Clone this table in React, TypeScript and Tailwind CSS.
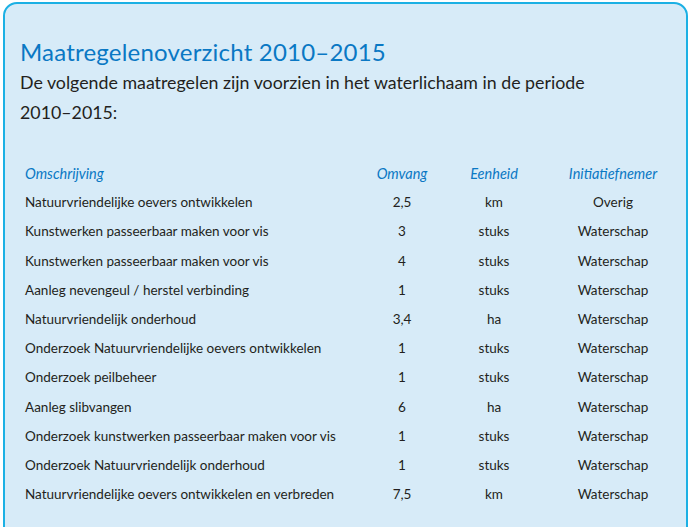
const rows: [string, string, string, string][] = [
  ["Natuurvriendelijke oevers ontwikkelen", "2,5", "km", "Overig"],
  ["Kunstwerken passeerbaar maken voor vis", "3", "stuks", "Waterschap"],
  ["Kunstwerken passeerbaar maken voor vis", "4", "stuks", "Waterschap"],
  ["Aanleg nevengeul / herstel verbinding", "1", "stuks", "Waterschap"],
  ["Natuurvriendelijk onderhoud", "3,4", "ha", "Waterschap"],
  ["Onderzoek Natuurvriendelijke oevers ontwikkelen", "1", "stuks", "Waterschap"],
  ["Onderzoek peilbeheer", "1", "stuks", "Waterschap"],
  ["Aanleg slibvangen", "6", "ha", "Waterschap"],
  ["Onderzoek kunstwerken passeerbaar maken voor vis", "1", "stuks", "Waterschap"],
  ["Onderzoek Natuurvriendelijk onderhoud", "1", "stuks", "Waterschap"],
  ["Natuurvriendelijke oevers ontwikkelen en verbreden", "7,5", "km", "Waterschap"],
];

export default function App() {
  return (
    <div className="w-[688px] h-[527px] overflow-hidden bg-white" style={{ fontFamily: "Lato, 'Noto Sans', sans-serif" }}>
      <div className="ml-[3px] mt-[2px] w-[685px] h-[560px] rounded-t-[14px] border-[2.5px] border-[#1bb0e4] bg-[#d7ebf8] pl-[15px] pt-[33px]">
        <h1 className="text-[24px] leading-[30px] text-[#0a78c4] tracking-[0.2px]">
          Maatregelenoverzicht 2010–2015
        </h1>
        <p className="text-[17.8px] leading-[30px] text-[#231f20] w-[600px]">
          De volgende maatregelen zijn voorzien in het waterlichaam in de periode 2010–2015:
        </p>

        <div className="mt-[32px] pl-[5px] text-[13.5px] leading-[29.2px] text-[#231f20]">
          <div className="grid grid-cols-[332px_90px_94px_144px] italic text-[14.5px] text-[#0a78c4]">
            <div>Omschrijving</div>
            <div className="text-center">Omvang</div>
            <div className="text-center">Eenheid</div>
            <div className="text-center">Initiatiefnemer</div>
          </div>
          {rows.map((r, i) => (
            <div key={i} className="grid grid-cols-[332px_90px_94px_144px]">
              <div>{r[0]}</div>
              <div className="text-center">{r[1]}</div>
              <div className="text-center">{r[2]}</div>
              <div className="text-center">{r[3]}</div>
            </div>
          ))}
        </div>
      </div>
    </div>
  );
}
